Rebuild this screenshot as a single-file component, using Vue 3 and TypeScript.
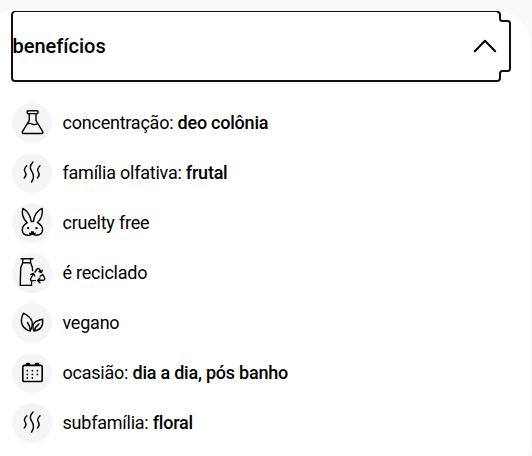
<script setup lang="ts">
import { ref } from 'vue'

type IconName = 'flask' | 'scent' | 'rabbit' | 'bottle' | 'leaf' | 'calendar'

interface Benefit {
  icon: IconName
  label: string
  value?: string
}

const open = ref(true)

const benefits: Benefit[] = [
  { icon: 'flask', label: 'concentração:', value: 'deo colônia' },
  { icon: 'scent', label: 'família olfativa:', value: 'frutal' },
  { icon: 'rabbit', label: 'cruelty free' },
  { icon: 'bottle', label: 'é reciclado' },
  { icon: 'leaf', label: 'vegano' },
  { icon: 'calendar', label: 'ocasião:', value: 'dia a dia, pós banho' },
  { icon: 'scent', label: 'subfamília:', value: 'floral' },
]
</script>

<template>
  <main class="page">
    <section class="card">
      <button class="header" type="button" :aria-expanded="open" @click="open = !open">
        <svg class="focus" viewBox="0 0 500 72" aria-hidden="true">
          <path d="M486 70H4Q1 70 1 67V4Q1 1.500 3 .8M486 .8Q489 1 489 4V7.500Q489 10 491.500 10H496.500Q499 10 499 12.500V57.500Q499 60 496.500 60H491.500Q489 60 489 62.500V67Q489 70 486 70" />
          <path class="top-edge" d="M3 .5H486" />
        </svg>
        <span class="title">benefícios</span>
        <svg class="chevron" :class="{ closed: !open }" viewBox="0 0 24 14" aria-hidden="true">
          <path d="M1.800 12.200 12 1.800l10.200 10.400" />
        </svg>
      </button>

      <ul v-if="open" class="list">
        <li v-for="item in benefits" :key="item.label" class="item">
          <span class="badge">
            <svg class="icon" viewBox="0 0 40 40" aria-hidden="true">
              <g v-if="item.icon === 'flask'">
                <rect x="15.200" y="7.700" width="10.800" height="2.900" rx=".8" />
                <path d="M17.200 10.600v7l-6.600 10.800q-1 2.100 1 2.100h18q2 0 1-2.100L24 17.600v-7M15.400 20.800q2.500-1 5 .3 2.600 1.200 5.200-.5" />
              </g>
              <g v-else-if="item.icon === 'scent'">
                <path d="M14.800 12.800c-3.600 3.500-2.300 5-1.300 7 1 2 .7 3.300-1.300 5.100M21 9.100c-4.300 4.500-2.500 7.200-1 9.600 2.300 3.700 2.200 6.600-.5 10.400M28 12.800c-3.600 3.500-2.300 5-1.300 7 1 2 .7 3.300-1.300 5.100" />
              </g>
              <g v-else-if="item.icon === 'rabbit'">
                <path d="M15.200 19.700C10.500 15 9.500 9.800 10.900 5.400c4.500 2.500 7.300 6.900 8.400 13.100h2.200C22 12.300 25 7.900 30.100 5.400c.9 4.700-.2 10-4.700 14.300 3.300 1.800 5.200 4.100 5.200 6.900 0 3.500-2.500 5.500-5.700 5.700-1.800.1-3.200-.2-4.500-1.300-1.300 1.100-2.800 1.400-4.600 1.300-3.200-.2-5.500-2.200-5.500-5.600 0-2.900 1.800-5.100 4.900-7M17.600 30.300q1.600.7 2.800-.9 1.200 1.600 2.800.9M19.400 29h2" />
                <path class="solid" d="M14.900 25.100a1.200 1.200 0 1 0 2.400 0 1.200 1.200 0 1 0-2.400 0M23.300 25.100a1.200 1.200 0 1 0 2.400 0 1.200 1.200 0 1 0-2.400 0" />
              </g>
              <g v-else-if="item.icon === 'bottle'">
                <path d="M9 5.700h12M10.700 6v3.700h7.900V6M10.700 9.700l-2 5.100-.5 17.600h11.300V28.500M18.600 9.700l1.700 4.500.3 3.400" />
                <path d="m23 19 2.100-3q1-1.200 2 0l2.300 3.200M27.200 18.600l2.300 1 .7-2.300M18.800 21.300l2.700-1 1.200 2.700M21.300 20.700l-2.600 5q-.7 1.800 1.200 1.900h3.300M30.900 21.600l1.500 2.900q1.100 2.600-1.400 2.800h-5M28 24.900l-2.300 2.500 2.300 2.300M28.200 23.100l2.700-1.500" />
              </g>
              <g v-else-if="item.icon === 'leaf'">
                <path d="M11.400 10.200c-3.200 6.800-2.400 13.200 4 16.800.9.500 1.800.8 2.800 1 3.700-7 3.300-12.800-6.800-17.800zM15.500 19.500c1.700 2.300 2.600 5 2.700 8.300" />
                <path d="M30.600 16.200c-8.400 1.500-11.500 5-8.600 11.800 6.400-.8 9.400-4.300 8.600-11.800zM27 20.900c-2.500 2-4.100 4.200-5 7.100" />
              </g>
              <g v-else>
                <rect class="frame" x="10.800" y="12.400" width="19.400" height="16.100" rx="1.800" />
                <path class="solid" d="M13.700 12.300v-1q0-1.500 1.500-1.500h1.700q1.500 0 1.500 1.500v1zM22.600 12.300v-1q0-1.500 1.500-1.500h1.700q1.500 0 1.500 1.500v1z" />
                <path class="dots" d="M15.300 17.700h.01M20.400 17.700h.01M25.400 17.700h.01M15.300 21.400h.01M20.400 21.400h.01M25.400 21.400h.01M15.300 25h.01M20.400 25h.01" />
              </g>
            </svg>
          </span>
          <span class="text">{{ item.label }}<template v-if="item.value">{{ ' ' }}<strong>{{ item.value }}</strong></template></span>
        </li>
      </ul>
    </section>
  </main>
</template>

<style>
body {
  background: #f9f9f9;
}
</style>

<style scoped>
.page {
  box-sizing: border-box;
  height: 456px;
  padding-top: 11px;
  overflow: hidden;
  font-family: Roboto, "Liberation Sans", sans-serif;
  color: #000;
}

.card {
  box-sizing: border-box;
  width: 550px;
  height: 463px;
  margin-left: -20px;
  padding-left: 32px;
  background: #fff;
  border-radius: 32px;
}

.header {
  position: relative;
  display: flex;
  align-items: center;
  justify-content: space-between;
  box-sizing: border-box;
  width: 489px;
  height: 70px;
  padding: 0 4px 0 0.5px;
  border: 0;
  outline: none;
  background: transparent;
  color: inherit;
  font: inherit;
}

.focus {
  position: absolute;
  top: 0;
  left: -1px;
  width: 500px;
  height: 72px;
  fill: none;
  stroke: #101010;
  stroke-width: 2;
}

.focus .top-edge {
  stroke-width: 1;
}

.title {
  font-size: 20px;
  font-weight: 500;
  line-height: 24px;
}

.chevron {
  width: 24px;
  height: 14px;
  fill: none;
  stroke: #000;
  stroke-width: 2;
  stroke-linecap: round;
  stroke-linejoin: round;
}

.chevron.closed {
  transform: rotate(180deg);
}

.list {
  display: flex;
  flex-direction: column;
  gap: 10px;
  margin: 0;
  padding: 21.5px 0 0;
  list-style: none;
}

.item {
  display: flex;
  align-items: center;
  gap: 10.5px;
  height: 40px;
}

.badge {
  width: 40px;
  height: 40px;
  border-radius: 50%;
  background: #f3f5f7;
}

.icon {
  display: block;
  width: 40px;
  height: 40px;
  fill: none;
  stroke: #000;
  stroke-width: 1.4;
  stroke-linecap: round;
  stroke-linejoin: round;
}

.icon .solid {
  fill: #000;
  stroke: none;
}

.icon .frame {
  stroke-width: 1.6;
}

.icon .dots {
  stroke-width: 1.8;
}

.text {
  font-size: 18px;
  line-height: 24px;
  letter-spacing: -0.23px;
  white-space: nowrap;
}

.text strong {
  font-weight: 500;
}
</style>
